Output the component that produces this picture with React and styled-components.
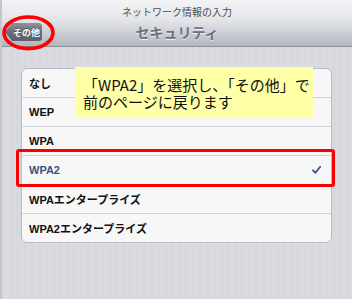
import React from 'react'
import styled, { createGlobalStyle } from 'styled-components'

const GlobalStyle = createGlobalStyle`
  html, body {
    margin: 0;
    padding: 0;
  }
  body {
    font-family: "Liberation Sans", "Noto Sans CJK JP", sans-serif;
  }
`

const Screen = styled.div`
  position: relative;
  width: 352px;
  height: 299px;
  overflow: hidden;
  display: flex;
  flex-direction: column;
  background: repeating-linear-gradient(90deg, #d7d9de 0 5px, #dbdde2 5px 7px);
  border-left: 2px solid #c3c6cc;
  box-sizing: border-box;
`

const Header = styled.header`
  height: 46px;
  flex-shrink: 0;
  display: flex;
  flex-direction: column;
  background: linear-gradient(#f3f4f6 0%, #e2e4e8 45%, #c0c3cb 85%, #b1b5bf 100%);
  border-bottom: 1px solid #8b9099;
  box-sizing: content-box;
`

const Subtitle = styled.div`
  height: 22px;
  padding-top: 3px;
  box-sizing: border-box;
  text-align: center;
  font-size: 10px;
  line-height: 19px;
  color: #4b4e56;
`

const NavRow = styled.div`
  display: grid;
  grid-template-columns: 1fr auto 1fr;
  align-items: center;
  height: 20px;
`

const BackButton = styled.button`
  justify-self: start;
  margin-left: 3px;
  width: 37px;
  height: 18px;
  padding: 0 0 0 6px;
  border: none;
  font-family: "Noto Sans CJK JP", sans-serif;
  font-size: 9px;
  font-weight: 700;
  color: #ffffff;
  text-shadow: 0 -1px 0 #4c5058;
  background: linear-gradient(#8d929b, #6a6e77 50%, #5d6169);
  clip-path: polygon(0 50%, 7px 0, calc(100% - 2px) 0, 100% 2px, 100% calc(100% - 2px), calc(100% - 2px) 100%, 7px 100%);
`

const Title = styled.h1`
  margin: 0;
  font-family: "Noto Sans CJK JP", sans-serif;
  font-size: 14px;
  font-weight: 700;
  color: #6b717d;
  text-shadow: 0 1px 0 #eef0f3;
`

const Body = styled.main`
  flex: 1;
  padding: 21px 20px 0 19px;
`

const List = styled.ul`
  list-style: none;
  margin: 0;
  padding: 0;
  background: #f7f7f7;
  border: 1px solid #b9bcc3;
  border-radius: 6px;
  overflow: hidden;
`

const Row = styled.li`
  height: 28px;
  display: flex;
  align-items: center;
  justify-content: space-between;
  padding: 0 10px 0 7px;
  border-top: ${p => (p.$first ? 'none' : '1px solid #d2d3d6')};
  font-family: "Liberation Sans", "Noto Sans CJK JP", sans-serif;
  font-size: 11px;
  font-weight: 700;
  color: ${p => (p.$selected ? '#3a5183' : '#111111')};
`

const Check = styled.svg`
  width: 9px;
  height: 8px;
`

const Callout = styled.div`
  position: absolute;
  left: 73px;
  top: 67px;
  width: 238px;
  height: 51px;
  box-sizing: border-box;
  padding: 9px 0 0 8px;
  background: #ffffa8;
  font-family: "Noto Sans CJK JP", sans-serif;
  font-size: 15px;
  line-height: 17px;
  color: #111111;
`

const Ellipse = styled.svg`
  position: absolute;
  left: 0;
  top: 15px;
  width: 54px;
  height: 36px;
`

const HighlightBox = styled.div`
  position: absolute;
  left: 14px;
  top: 149px;
  width: 319px;
  height: 38px;
  box-sizing: border-box;
  border: 3.5px solid #ff0000;
  border-radius: 3px;
`

const options = ['なし', 'WEP', 'WPA', 'WPA2', 'WPAエンタープライズ', 'WPA2エンタープライズ']

export default function App() {
  return (
    <>
      <GlobalStyle />
      <Screen>
        <Header>
          <Subtitle>ネットワーク情報の入力</Subtitle>
          <NavRow>
            <BackButton>その他</BackButton>
            <Title>セキュリティ</Title>
            <span />
          </NavRow>
        </Header>
        <Body>
          <List>
            {options.map((o, i) => (
              <Row key={o} $first={i === 0} $selected={o === 'WPA2'}>
                {o}
                {o === 'WPA2' && (
                  <Check viewBox="0 0 9 8">
                    <path d="M1 4.3 L3.4 6.8 L8.2 0.8" fill="none" stroke="#3a5183" strokeWidth="1.8" strokeLinecap="round" strokeLinejoin="round" />
                  </Check>
                )}
              </Row>
            ))}
          </List>
        </Body>
        <Callout>
          「WPA2」を選択し、「その他」で<br />前のページに戻ります
        </Callout>
        <Ellipse viewBox="0 0 54 36">
          <ellipse cx="26.5" cy="17.8" rx="24.5" ry="15.8" fill="none" stroke="#ff0000" strokeWidth="3.6" />
        </Ellipse>
        <HighlightBox />
      </Screen>
    </>
  )
}
